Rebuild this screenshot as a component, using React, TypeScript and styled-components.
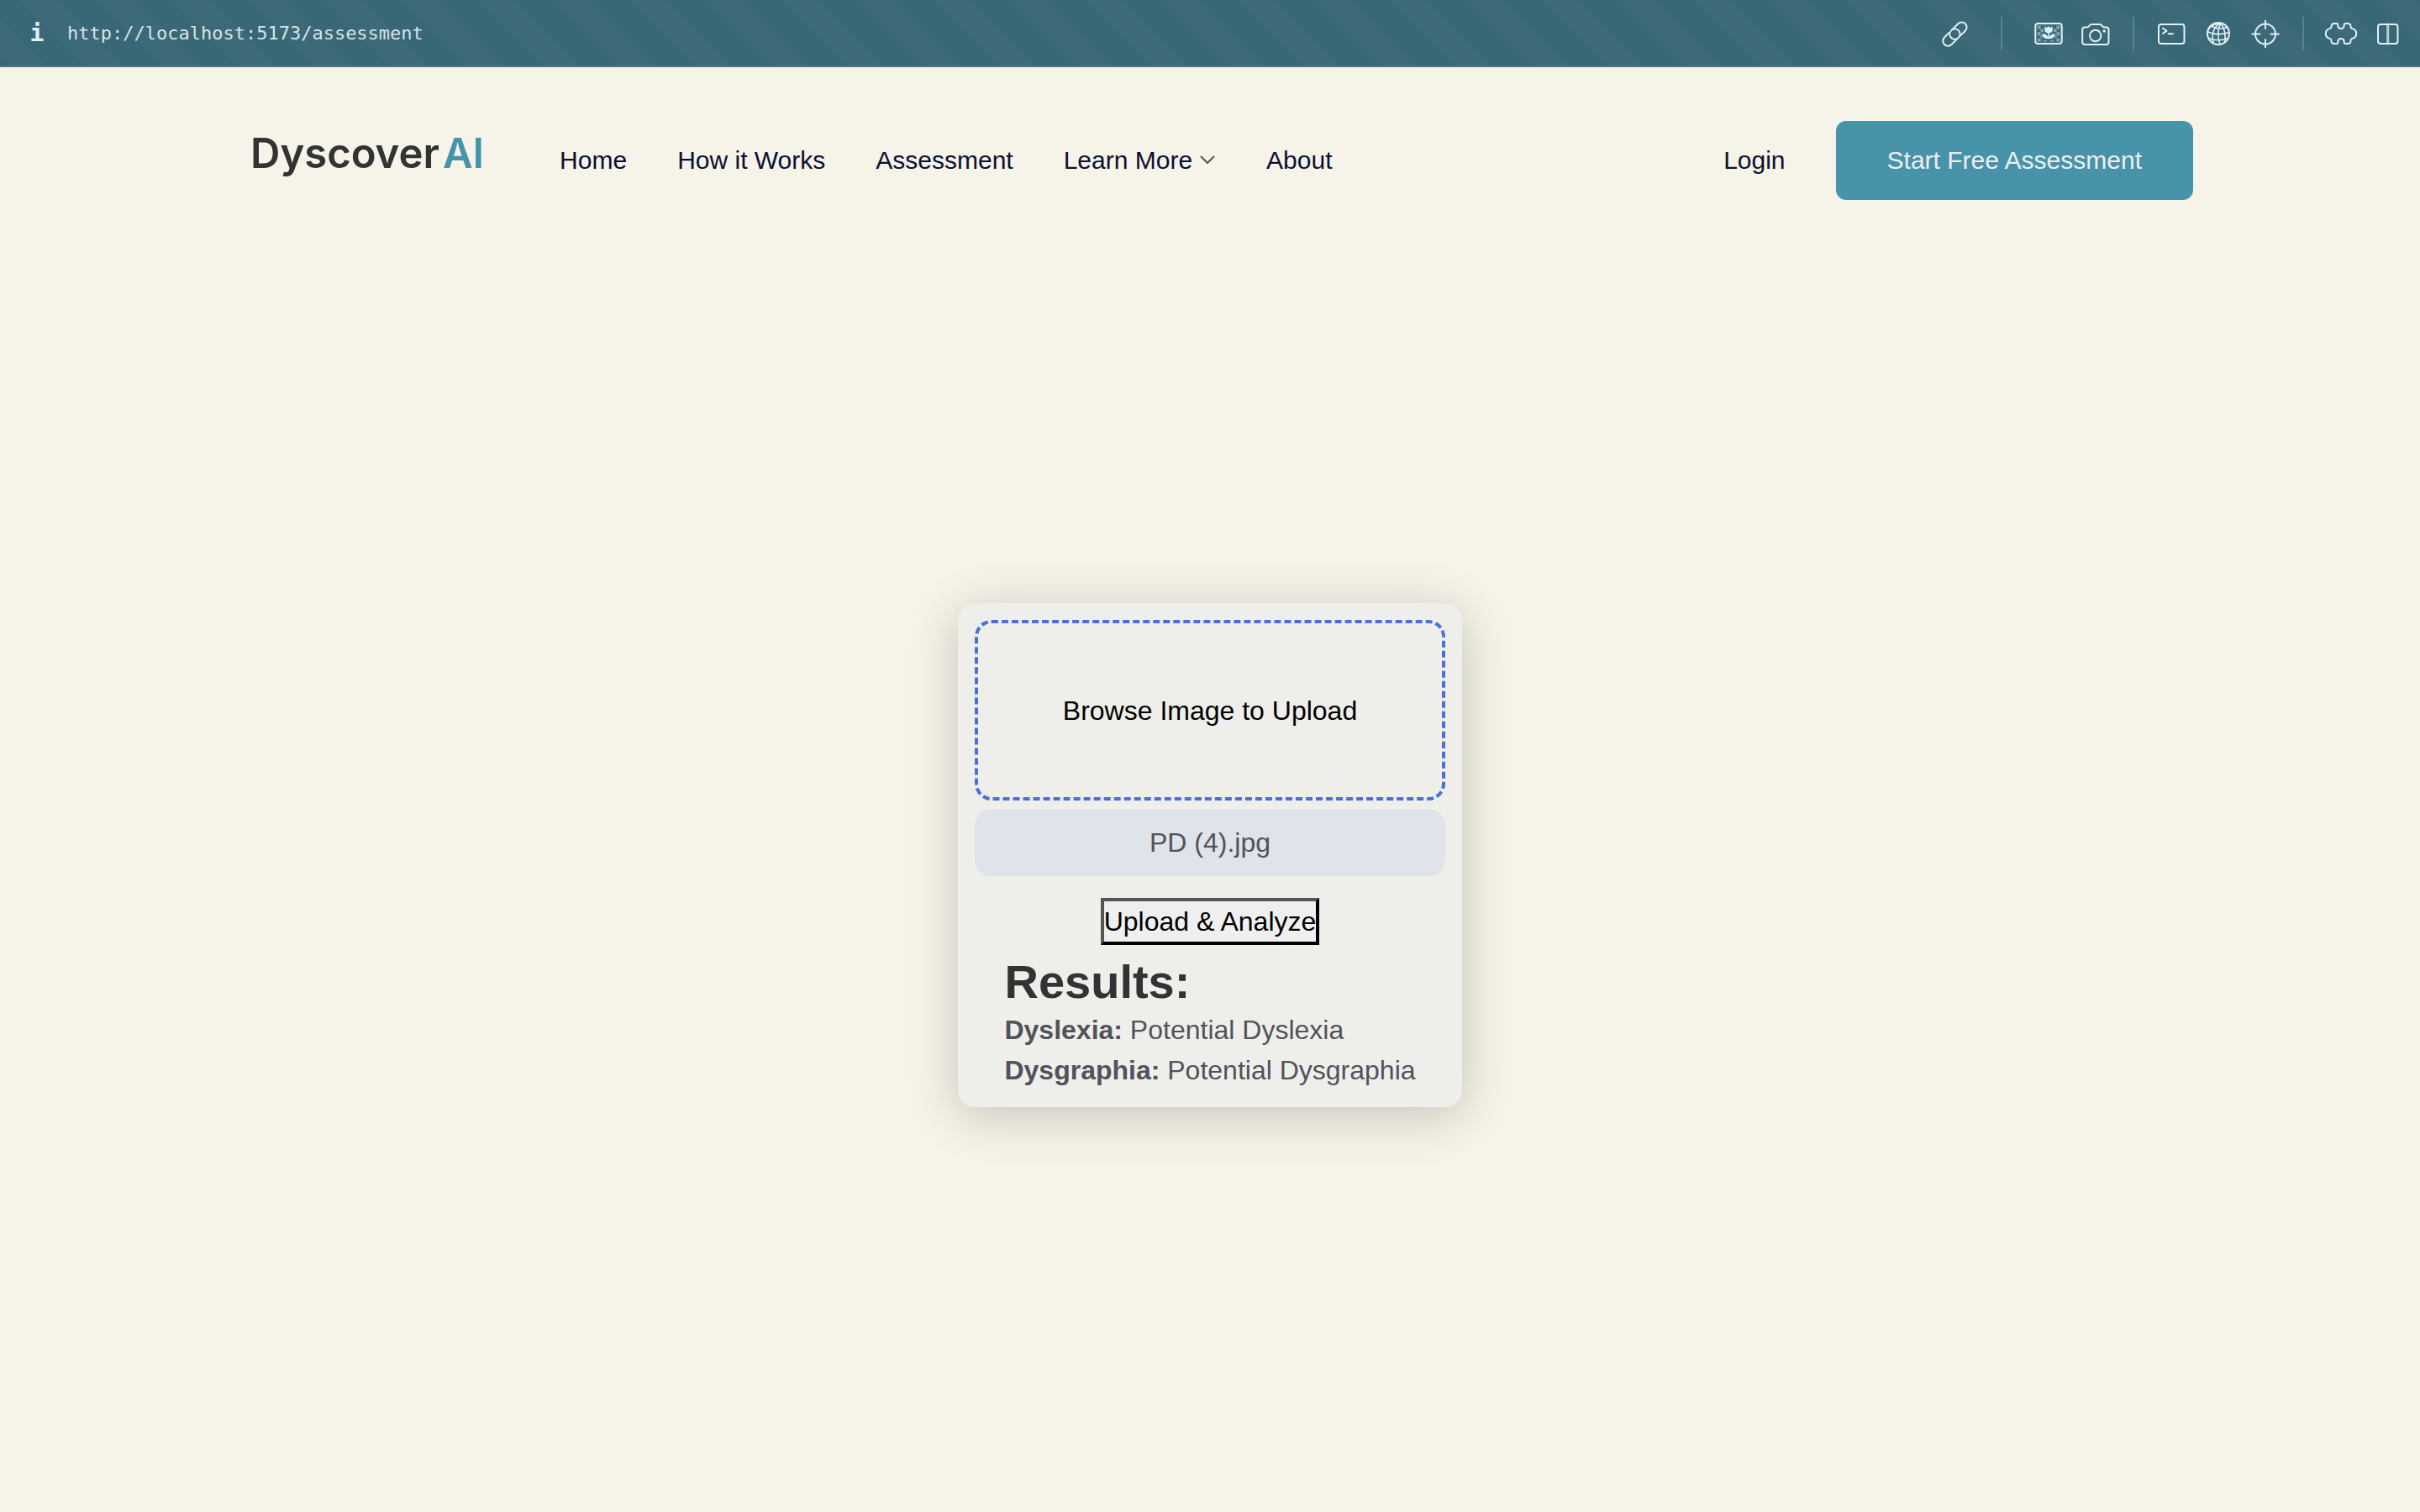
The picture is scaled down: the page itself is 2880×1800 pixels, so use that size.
import React from 'react';
import styled, { createGlobalStyle } from 'styled-components';

const GlobalStyle = createGlobalStyle`
  *, *::before, *::after { box-sizing: border-box; }
  body {
    margin: 0;
    background: #f6f3e8;
    font-family: "Liberation Sans", Arial, sans-serif;
    font-size: 32px;
    line-height: 48px;
    color: #52525b;
  }
  button, input { font: inherit; color: inherit; }
  h2, p { margin: 0; }
`;

const Page = styled.div`
  min-height: 100vh;
  display: flex;
  flex-direction: column;
`;

const BrowserBar = styled.div`
  display: flex;
  align-items: center;
  height: 80px;
  padding: 0 18px 0 24px;
  color: #e0f0f6;
  background: repeating-linear-gradient(
    45deg,
    #386775 0 10px,
    #3d6a78 10px 41px,
    #386775 41px 64px
  );
  box-shadow: inset 0 -2px #4b7685;
`;

const IconButton = styled.button`
  display: grid;
  place-items: center;
  width: 40px;
  height: 40px;
  padding: 0;
  border: 0;
  background: none;
`;

const InfoButton = styled(IconButton)`
  font: bold 28px/40px "DejaVu Sans Mono", monospace;
`;

const Address = styled.input`
  flex: 1;
  min-width: 0;
  height: 40px;
  margin-left: 16px;
  padding: 0;
  border: 0;
  background: none;
  color: #d7e3e5;
  font: 22px/40px "DejaVu Sans Mono", monospace;
`;

const Tools = styled.div`
  display: flex;
  gap: 16px;
`;

const Separator = styled.span<{ $space: number }>`
  width: 2px;
  height: 40px;
  margin: 0 ${(p) => p.$space}px;
  background: #57828f;
`;

const Header = styled.header`
  display: flex;
  align-items: center;
  padding: 64px 270px 0 298px;
  font-size: 30px;
`;

const Logo = styled.a`
  display: flex;
  gap: 4px;
  margin-bottom: 16px;
  color: #333;
  text-decoration: none;
  font: 600 49px/64px Inter, "Open Sans", sans-serif;
`;

const LogoAccent = styled.span`
  color: #4694ab;
`;

const Nav = styled.nav`
  display: flex;
  gap: 60px;
  margin-left: 90px;
`;

const NavLink = styled.a`
  display: flex;
  align-items: center;
  gap: 8px;
  color: #0b1033;
  text-decoration: none;
`;

const Actions = styled.div`
  display: flex;
  align-items: center;
  gap: 60px;
  margin-left: auto;
`;

const StartLink = styled.a`
  padding: 23px 61px;
  border-radius: 12px;
  background: #4793aa;
  color: #eee;
  text-decoration: none;
`;

const Main = styled.main`
  flex: 1;
  display: grid;
  place-items: center;
  padding-bottom: 2px;
`;

const Card = styled.section`
  display: flex;
  flex-direction: column;
  align-items: center;
  width: 600px;
  padding: 20px;
  border-radius: 20px;
  background: #eeefea;
  box-shadow: 0 10px 60px rgba(0, 0, 0, 0.2);
`;

const BrowseButton = styled.button`
  align-self: stretch;
  height: 215px;
  border: 4px dashed #4a6fdc;
  border-radius: 20px;
  background: none;
  color: #000;
`;

const FileName = styled.p`
  align-self: stretch;
  margin: 10px 0 26px;
  padding: 16px;
  border-radius: 20px;
  background: #dfe3ea;
  text-align: center;
`;

const AnalyzeButton = styled.button`
  padding: 0;
  border: 4px outset #000;
  background: #efefef;
  color: #000;
`;

const Results = styled.div`
  margin-top: 10px;
`;

const ResultsTitle = styled.h2`
  color: #333;
  font-size: 56px;
  line-height: 67px;
`;

const Glyph = ({ children }: { children: React.ReactNode }) => (
  <svg
    width="40"
    height="40"
    viewBox="0 0 40 40"
    fill="none"
    stroke="currentColor"
    strokeWidth="2"
    strokeLinecap="round"
    strokeLinejoin="round"
    aria-hidden="true"
  >
    {children}
  </svg>
);

const LinkGlyph = () => (
  <Glyph>
    <g transform="translate(20.4 20.6) rotate(-45)">
      <path d="M3.8 6H11.5A6 6 0 0 0 11.5 -6H0A6 6 0 0 0 -2 5.7" />
      <path d="M-3.8 -6H-11.5A6 6 0 0 0 -11.5 6H0A6 6 0 0 0 2 -5.7" />
    </g>
  </Glyph>
);

const checks = [0, 1, 2, 3, 4].flatMap((row) =>
  [0, 1, 2, 3, 4, 5, 6].filter((col) => (row + col) % 2 === 0).map((col) => [col, row]),
);

const PictureGlyph = () => (
  <Glyph>
    <rect x="4.3" y="8" width="31.4" height="24" rx="3" />
    <g fill="currentColor" stroke="none">
      {checks.map(([col, row]) => (
        <rect key={`${col}-${row}`} x={6.7 + col * 3.8} y={10.6 + row * 3.8} width="3.8" height="3.8" opacity="0.45" />
      ))}
    </g>
    <path d="M14 11h12v8l-3 2.5 5 1v4l-6 2h-4l-6-2v-4l5-1-3-2.500z" fill="#386775" stroke="none" />
    <path
      d="M15.300 11.500l2.400 1.500 2.300-1.800 2.300 1.800 2.400-1.500v4.200c0 2-1.600 3.500-3.900 3.600v4.600c1-2.200 3.300-3.400 7-3.300-.4 3.600-2.800 5.700-6.500 5.700h-2.600c-3.700 0-6.100-2.100-6.500-5.700 3.700-.1 6 1.100 7 3.300v-4.600c-2.300-.1-3.900-1.600-3.900-3.600z"
      fill="currentColor"
      stroke="none"
    />
  </Glyph>
);

const CameraGlyph = () => (
  <Glyph>
    <path d="M7 12.500H9.500C12.500 12.500 12 9 15.500 9H24.500C28 9 27.500 12.500 30.500 12.500H32.500C34.500 12.500 35.500 13.500 35.500 15.500V30C35.500 32 34.500 33 32.500 33H7.200C5.200 33 4.200 32 4.200 30V15.500C4.200 13.500 5 12.500 7 12.500Z" />
    <circle cx="19.700" cy="22.500" r="6.700" />
    <circle cx="30.200" cy="17" r="1.800" fill="currentColor" stroke="none" />
  </Glyph>
);

const TerminalGlyph = () => (
  <Glyph>
    <rect x="5" y="9" width="30.500" height="23" rx="3" />
    <path d="M10 13.500l4.500 3.200-4.500 3.200M16.500 20.200h5.500" />
  </Glyph>
);

const GlobeGlyph = () => (
  <Glyph>
    <circle cx="20" cy="20" r="13" />
    <g strokeWidth="1.600">
      <path d="M23 7.500C15 11 11 20 14.500 31.500M23 7.500C19.500 14 18.500 23 22 33M23 7.500C27 13 29 22 27.500 30.500M23 7.500C17 8 11.500 11 9 14" />
      <path d="M11 10.500C17 14.500 25 14.500 31 12.500M7 17.500C14 21.500 25 21.500 33 18.500M8.500 25.500C15 28.500 25 28.500 31.500 25.500" />
    </g>
  </Glyph>
);

const TargetGlyph = () => (
  <Glyph>
    <circle cx="20" cy="20.500" r="12" />
    <path d="M20 4.700V14M20 27v9.300M4.200 20.500H13.500M26.500 20.500H35.800" />
  </Glyph>
);

const PuzzleGlyph = () => (
  <Glyph>
    <path d="M12 8h3c1 0 1.300.8 1.300 2 0 2.600 1.400 4 3.700 4s3.700-1.400 3.700-4c0-1.200.3-2 1.300-2h3c2.300 0 3.500 1.300 3.500 3.500 0 1.500.5 2.200 2 2.600 3 .7 4.700 2.700 4.700 5.900s-1.700 5.200-4.700 5.900c-1.500.4-2 1.100-2 2.600 0 2.200-1.200 3.500-3.500 3.500h-3c-1 0-1.300-.8-1.300-2 0-2.600-1.400-4-3.700-4s-3.700 1.400-3.700 4c0 1.200-.3 2-1.300 2h-3c-2.300 0-3.500-1.300-3.500-3.500 0-1.500-.5-2.200-2-2.600-3-.7-4.700-2.700-4.700-5.900s1.700-5.200 4.700-5.900c1.500-.4 2-1.100 2-2.600 0-2.200 1.200-3.500 3.500-3.500z" />
  </Glyph>
);

const SplitGlyph = () => (
  <Glyph>
    <rect x="8" y="9" width="23.500" height="23" rx="3" />
    <path d="M19.700 9v23" strokeWidth="3" opacity="0.75" />
  </Glyph>
);

const Chevron = () => (
  <svg width="20" height="12" viewBox="0 0 20 12" fill="none" stroke="#555" strokeWidth="2" aria-hidden="true">
    <path d="M2 1l8 8 8-8" />
  </svg>
);

export default function App() {
  return (
    <Page>
      <GlobalStyle />
      <BrowserBar>
        <InfoButton aria-label="Site information">i</InfoButton>
        <Address aria-label="Address" defaultValue="http://localhost:5173/assessment" />
        <Tools>
          <IconButton aria-label="Copy link"><LinkGlyph /></IconButton>
          <Separator $space={19} />
          <IconButton aria-label="Images"><PictureGlyph /></IconButton>
          <IconButton aria-label="Screenshot"><CameraGlyph /></IconButton>
          <Separator $space={8} />
          <IconButton aria-label="Console"><TerminalGlyph /></IconButton>
          <IconButton aria-label="Network"><GlobeGlyph /></IconButton>
          <IconButton aria-label="Inspect"><TargetGlyph /></IconButton>
          <Separator $space={8} />
          <IconButton aria-label="Extensions"><PuzzleGlyph /></IconButton>
          <IconButton aria-label="Split view"><SplitGlyph /></IconButton>
        </Tools>
      </BrowserBar>
      <Header>
        <Logo href="#home">
          <span>Dyscover</span>
          <LogoAccent>AI</LogoAccent>
        </Logo>
        <Nav>
          <NavLink href="#home">Home</NavLink>
          <NavLink href="#how">How it Works</NavLink>
          <NavLink href="#assessment">Assessment</NavLink>
          <NavLink href="#learn">Learn More<Chevron /></NavLink>
          <NavLink href="#about">About</NavLink>
        </Nav>
        <Actions>
          <NavLink href="#login">Login</NavLink>
          <StartLink href="#assessment">Start Free Assessment</StartLink>
        </Actions>
      </Header>
      <Main>
        <Card>
          <BrowseButton type="button">Browse Image to Upload</BrowseButton>
          <FileName>PD (4).jpg</FileName>
          <AnalyzeButton type="button">Upload &amp; Analyze</AnalyzeButton>
          <Results>
            <ResultsTitle>Results:</ResultsTitle>
            <p><strong>Dyslexia:</strong> Potential Dyslexia</p>
            <p><strong>Dysgraphia:</strong> Potential Dysgraphia</p>
          </Results>
        </Card>
      </Main>
    </Page>
  );
}
